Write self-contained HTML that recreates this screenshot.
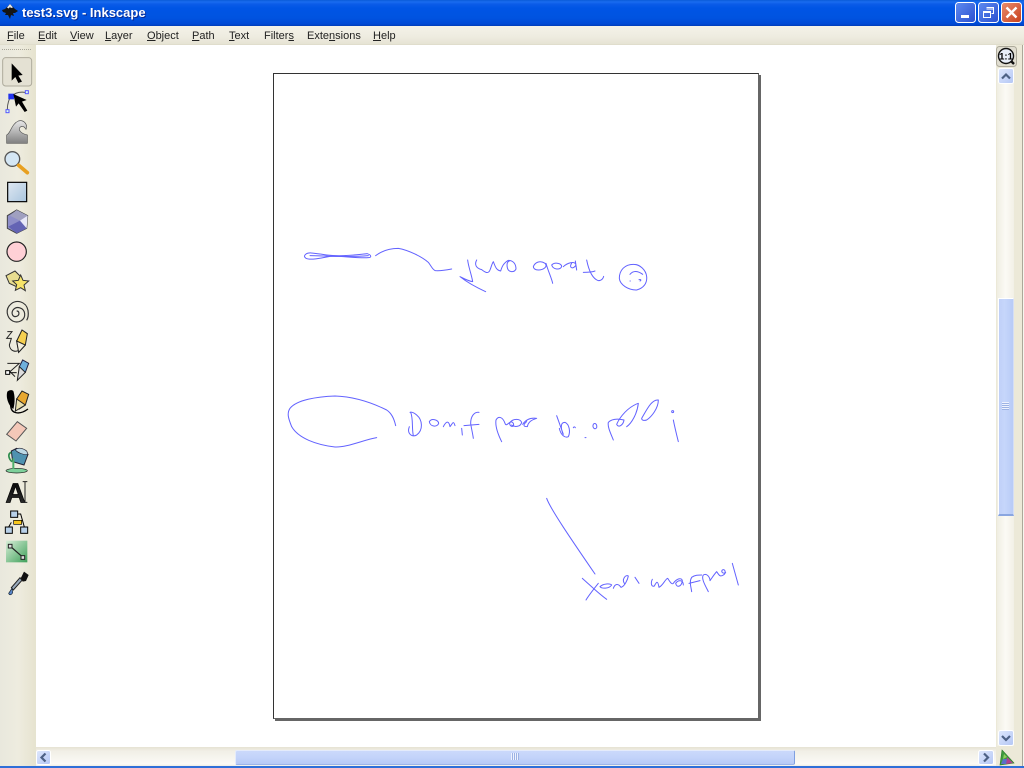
<!DOCTYPE html>
<html><head><meta charset="utf-8"><title>test3.svg - Inkscape</title>
<style>
html,body{margin:0;padding:0;width:1024px;height:768px;overflow:hidden;background:#ece9d8}
.a{position:absolute}
#title{left:0;top:0;width:1024px;height:26px;background:linear-gradient(#0a5bd8 0,#1a6cf0 2px,#0b5ce8 4px,#0055e5 8px,#0053e0 18px,#0049d5 24px,#003cb8 26px)}
#ttext{left:22px;top:5px;color:#fff;font:bold 13px "Liberation Sans",sans-serif;text-shadow:1px 1px 0 #0a2a90;white-space:nowrap}
#menu{left:0;top:26px;width:1024px;height:19px;background:linear-gradient(#f4f2e9,#eeece0 60%,#e6e3d4);border-bottom:1px solid #e0ddcc;box-sizing:border-box}
.m{position:absolute;top:4px;font:11px "Liberation Sans",sans-serif;color:#222;white-space:nowrap}
#tools{left:0;top:45px;width:36px;height:721px;background:linear-gradient(90deg,#e9e8dd,#eeecdf 50%,#e6e3cf 100%)}
#canvas{left:36px;top:45px;width:960px;height:702px;background:#fff}
#vs{left:996px;top:45px;width:28px;height:721px;background:#ece9d8}
#vt{left:997px;top:68px;width:17px;height:678px;background:linear-gradient(90deg,#f0eee2,#fbfaf5 50%,#f2f0e6)}
#hs{left:36px;top:747px;width:960px;height:19px;background:linear-gradient(#e6e3d3,#f1efe6 4px,#fbfaf6 17px,#f1efe4)}
#rb{left:996px;top:747px;width:28px;height:19px;background:#ece9d8}
#edge{left:1022px;top:45px;width:1px;height:721px;background:#aca899}
#edge2{left:1023px;top:45px;width:1px;height:721px;background:#f6f5ee}
#bot{left:0;top:766px;width:1024px;height:2px;background:#2f6fd8}
#page{left:273px;top:73px;width:484px;height:644px;background:#fff;border:1px solid #333;border-right-color:#666;border-bottom-color:#666;box-shadow:2px 2px 0 #666}
#vthumb{left:998px;top:298px;width:14px;height:215px;background:linear-gradient(90deg,#c0d0f8,#c6d6fb 40%,#b8cbf6);border:1px solid #fff;border-bottom:2px solid #8aa6e0;border-right-color:#d5def5}
#hthumb{left:235px;top:750px;width:558px;height:13px;background:linear-gradient(#cbd9fb,#c3d3fa 50%,#b7caf6);border:1px solid #e4ebfb;border-right:1px solid #7f9fe0;border-bottom:1px solid #9db5ea;border-radius:2px}
svg{position:absolute;left:0;top:0}
</style></head><body>
<div class="a" id="title"></div>
<div class="a" id="ttext">test3.svg - Inkscape</div>
<div class="a" id="menu">
<span class="m" style="left:7px;top:4px"><u>F</u>ile</span>
<span class="m" style="left:38px"><u>E</u>dit</span>
<span class="m" style="left:70px"><u>V</u>iew</span>
<span class="m" style="left:105px"><u>L</u>ayer</span>
<span class="m" style="left:147px"><u>O</u>bject</span>
<span class="m" style="left:192px"><u>P</u>ath</span>
<span class="m" style="left:229px"><u>T</u>ext</span>
<span class="m" style="left:264px">Filter<u>s</u></span>
<span class="m" style="left:307px">Exte<u>n</u>sions</span>
<span class="m" style="left:373px"><u>H</u>elp</span>
</div>
<div class="a" id="tools"></div>
<div class="a" id="canvas"></div>
<div class="a" id="vs"></div>
<div class="a" id="vt"></div>
<div class="a" id="hs"></div>
<div class="a" id="rb"></div>
<div class="a" id="edge"></div>
<div class="a" id="edge2"></div>
<div class="a" id="bot"></div>
<div class="a" id="page"></div>
<div class="a" id="vthumb"></div>
<div class="a" id="hthumb"></div>

<svg width="1024" height="768" viewBox="0 0 1024 768">
<defs>
<linearGradient id="bb" x1="0" y1="0" x2="1" y2="1"><stop offset="0" stop-color="#5f8bf0"/><stop offset="1" stop-color="#2a4fd0"/></linearGradient>
<linearGradient id="rd" x1="0" y1="0" x2="1" y2="1"><stop offset="0" stop-color="#e88d6f"/><stop offset="1" stop-color="#c8401c"/></linearGradient>
<linearGradient id="sb" x1="0" y1="0" x2="1" y2="1"><stop offset="0" stop-color="#dfe8fd"/><stop offset="1" stop-color="#b3c6f5"/></linearGradient>
<linearGradient id="rc" x1="0" y1="0" x2="1" y2="1"><stop offset="0" stop-color="#dfe8f2"/><stop offset="1" stop-color="#a9c5de"/></linearGradient>
<linearGradient id="gy" x1="0" y1="0" x2="0" y2="1"><stop offset="0" stop-color="#e8e8e8"/><stop offset="1" stop-color="#808080"/></linearGradient>
<linearGradient id="gr" x1="0" y1="0" x2="1" y2="1"><stop offset="0" stop-color="#d8eed8"/><stop offset="1" stop-color="#3fa05a"/></linearGradient>
<linearGradient id="ag" x1="0" y1="0" x2="0" y2="1"><stop offset="0" stop-color="#000"/><stop offset="1" stop-color="#333"/></linearGradient>
</defs>

<!-- inkscape logo -->
<path d="M10,4L15,9L18,11L15,13L13,13L14,16L11,15L10,19L8,15L5,15L6,13L3,12L2,10L5,9Z" fill="#151515"/>
<path d="M10,4L13,7.5L11,8L10,7L8.5,8.5L7,7.5Z" fill="#e8e8e8"/>

<!-- window buttons -->
<rect x="955.5" y="2.5" width="20" height="20" rx="3" fill="url(#bb)" stroke="#fff"/>
<rect x="961" y="15" width="8" height="3" fill="#fff"/>
<rect x="978.5" y="2.5" width="20" height="20" rx="3" fill="url(#bb)" stroke="#fff"/>
<path d="M986.5,7.5h7v6h-2M986.5,9h7" fill="none" stroke="#fff"/>
<rect x="983.5" y="11.5" width="7" height="6" fill="none" stroke="#fff"/>
<path d="M983,12.5h8" stroke="#fff"/>
<rect x="1001.5" y="2.5" width="20" height="20" rx="3" fill="url(#rd)" stroke="#fff"/>
<path d="M1006.5,7.5L1016.5,17.5M1016.5,7.5L1006.5,17.5" stroke="#fff" stroke-width="2.4"/>

<!-- handle -->
<path d="M2,49.5H32" stroke="#a9a79a" stroke-width="1" stroke-dasharray="1 1"/>

<!-- tools top (zoom coords) -->
<g transform="translate(0,50) scale(.33333)">
<rect x="8" y="23" width="87" height="85" rx="9" fill="#e4e1d3" stroke="#aeab9c" stroke-width="3"/>
<path d="M35,40L68,75L55,77L66,95L55,99L46,81L35,92Z" fill="#000"/>
<path d="M22,178C22,160 28,145 33,140C45,128 60,125 75,127" fill="none" stroke="#555" stroke-width="3"/>
<rect x="25" y="131" width="17" height="17" fill="#2233ee"/>
<rect x="76" y="122" width="9" height="9" fill="#dfe" stroke="#55f" stroke-width="3"/>
<rect x="18" y="179" width="9" height="9" fill="#dfe" stroke="#55f" stroke-width="3"/>
<path d="M40,132L80,150L66,155L82,182L74,186L56,160L48,170Z" fill="#000"/>
<path d="M20,255C32,250 34,222 55,213C70,208 84,222 78,238C74,230 66,226 60,232C54,240 62,250 82,255L82,280L20,280Z" fill="url(#gy)" stroke="#555" stroke-width="2"/>
<circle cx="37" cy="327" r="22" fill="#d4e6f4" stroke="#555" stroke-width="4"/>
<path d="M56,346L82,368" stroke="#e8a020" stroke-width="11" stroke-linecap="round"/>
<rect x="23" y="397" width="57" height="58" fill="url(#rc)" stroke="#000" stroke-width="3.5"/>
<path d="M50,480L83,497L80,535L50,550L22,535L22,497Z" fill="#8f8fc8" stroke="#444" stroke-width="3"/>
<path d="M50,480L83,497L60,512L30,497Z" fill="#a0a0c0"/>
<path d="M60,512L80,535L50,550L25,530Z" fill="#6464b4"/>
<path d="M60,512L83,497L80,535Z" fill="#e8e8f8"/>
</g>

<g transform="translate(0,235) scale(.33333)">
<circle cx="50" cy="50" r="29" fill="#ffd0d6" stroke="#222" stroke-width="3.5"/>
<path d="M18,122L45,108L62,125L50,155L28,145Z" fill="#e8dd90" stroke="#333" stroke-width="3"/>
<path d="M62,120L69,136L86,138L72,150L76,167L62,158L46,166L50,149L38,138L55,136Z" fill="#f6e46a" stroke="#333" stroke-width="3"/>
<path d="M50,228C58,228 60,240 50,244C38,248 32,234 40,224C50,212 72,218 74,236C76,256 54,266 38,258C20,248 14,222 34,206C50,194 78,198 84,226C86,240 84,250 80,256" fill="none" stroke="#333" stroke-width="3.5"/>
<path d="M22,290L36,290L20,310L34,310L28,330C30,350 48,352 58,345" fill="none" stroke="#222" stroke-width="3"/>
<path d="M50,318L66,285L82,296L76,330L56,352Z" fill="#f6d050" stroke="#222" stroke-width="3"/>
<path d="M50,318L76,330L56,352Z" fill="#f2eedd" stroke="#222" stroke-width="3"/>
<path d="M22,385H58L30,410L45,425" fill="none" stroke="#222" stroke-width="3"/>
<rect x="17" y="407" width="12" height="11" fill="#fff" stroke="#000" stroke-width="3"/>
<path d="M30,413H50" stroke="#111" stroke-width="3"/>
<path d="M58,395L68,375L86,385L76,412L56,420Z" fill="#6fb0dc" stroke="#224" stroke-width="3"/>
<path d="M58,395L76,412L52,436Z" fill="#ddd" stroke="#222" stroke-width="3"/>
<path d="M22,470C16,490 28,515 40,522C46,500 44,480 40,468C36,464 28,464 22,470Z" fill="#000"/>
<path d="M32,510C32,538 60,540 84,522" fill="none" stroke="#000" stroke-width="4"/>
<path d="M50,492L66,468L86,478L76,510L58,522Z" fill="#e8a830" stroke="#222" stroke-width="3"/>
<path d="M50,492L76,510L46,528Z" fill="#e8e0b0" stroke="#222" stroke-width="3"/>
</g>

<g transform="translate(0,415) scale(.33333)">
<path d="M52,20L80,40L48,78L20,58Z" fill="#f4c8b8" stroke="#555" stroke-width="3"/>
<path d="M34,108L50,100L84,118L72,150L38,140Z" fill="#4f92b0" stroke="#223" stroke-width="3"/>
<path d="M46,104C50,112 74,122 84,118L80,108C70,100 55,96 46,104Z" fill="#bcd8e4" stroke="#223" stroke-width="2"/>
<path d="M34,112C22,116 26,132 36,140" fill="none" stroke="#2c8c4c" stroke-width="5"/>
<ellipse cx="50" cy="167" rx="32" ry="7" fill="#7ed09a" stroke="#222" stroke-width="2"/>
<path d="M40,130V162" stroke="#4fb06c" stroke-width="6"/>
<text x="16" y="262" font-family="Liberation Sans,sans-serif" font-weight="700" font-size="84" fill="url(#ag)" stroke="#000" stroke-width="2">A</text>
<path d="M68,200H82M75,200V262M68,262H82" stroke="#222" stroke-width="3" fill="none"/>
<rect x="32" y="288" width="21" height="19" fill="#b8d0e8" stroke="#000" stroke-width="3"/>
<rect x="16" y="336" width="21" height="19" fill="#b8d0e8" stroke="#000" stroke-width="3"/>
<rect x="62" y="336" width="21" height="19" fill="#b8d0e8" stroke="#000" stroke-width="3"/>
<rect x="41" y="316" width="24" height="12" fill="#f8c820" stroke="#000" stroke-width="2"/>
<path d="M53,297H62L73,336M34,322L26,336" fill="none" stroke="#000" stroke-width="3"/>
<rect x="18" y="377" width="64" height="65" fill="url(#gr)"/>
<path d="M30,393L70,428" stroke="#222" stroke-width="3.5"/>
<rect x="25" y="388" width="11" height="11" fill="#ddd" stroke="#222" stroke-width="3"/>
<rect x="63" y="422" width="11" height="11" fill="#ddd" stroke="#222" stroke-width="3"/>
<path d="M62,490L72,470L86,480L78,498L68,500Z" fill="#111"/>
<path d="M66,496L40,525L34,518L60,488Z" fill="#9ab" stroke="#222" stroke-width="3"/>
<path d="M36,520L26,535C28,542 36,540 38,532Z" fill="#5a86c8" stroke="#123" stroke-width="2"/>
</g>

<!-- 1:1 and scroll buttons -->
<rect x="996.5" y="46.5" width="20" height="20" rx="3" fill="#e0ddd0" stroke="#aeab9c"/>
<circle cx="1006" cy="56" r="7.5" fill="#e8eef8" stroke="#111" stroke-width="1.4"/>
<path d="M1011,61L1014,64" stroke="#111" stroke-width="2.4"/>
<text x="1006" y="59.5" text-anchor="middle" font-family="Liberation Sans,sans-serif" font-size="9.5" font-weight="700" fill="#000">1:1</text>

<rect x="998.5" y="68.5" width="15" height="15" rx="2" fill="url(#sb)" stroke="#fff"/>
<path d="M1002,78.5L1006,74.5L1010,78.5" fill="none" stroke="#4d6185" stroke-width="2.2"/>
<rect x="998.5" y="730.5" width="15" height="15" rx="2" fill="url(#sb)" stroke="#fff"/>
<path d="M1002,736L1006,740L1010,736" fill="none" stroke="#4d6185" stroke-width="2.2"/>
<rect x="36.5" y="750.5" width="14" height="14" rx="2" fill="url(#sb)" stroke="#fff"/>
<path d="M45.5,753.5L41.5,757.5L45.5,761.5" fill="none" stroke="#4d6185" stroke-width="2.2"/>
<rect x="978.5" y="750.5" width="15" height="14" rx="2" fill="url(#sb)" stroke="#fff"/>
<path d="M984,753.5L988,757.5L984,761.5" fill="none" stroke="#4d6185" stroke-width="2.2"/>

<!-- grips -->
<path d="M1002,402.5H1009M1002,404.5H1009M1002,406.5H1009M1002,408.5H1009" stroke="#eef2fe" stroke-width="1"/>
<path d="M1002,403.5H1009M1002,405.5H1009M1002,407.5H1009M1002,409.5H1009" stroke="#9db3e4" stroke-width="1"/>
<path d="M511.5,753V760M513.5,753V760M515.5,753V760M517.5,753V760" stroke="#eef2fe"/>
<path d="M512.5,753V760M514.5,753V760M516.5,753V760M518.5,753V760" stroke="#9db3e4"/>

<!-- colour triangle -->
<path d="M1002,750L1014,763L1000,765Z" fill="#3f9a3f" stroke="#2c7a2c" stroke-width=".6"/>
<path d="M1004,754L1007,757L1003,759Z" fill="#8fcf5f"/>
<path d="M1007,757L1013,763L1006,764Z" fill="#b04090"/>
<path d="M1003,759L1007,759L1006,764L1001,764Z" fill="#5a70c8"/>

<!-- drawn strokes -->
<g fill="none" stroke="#6262ff" stroke-width="3" stroke-linecap="round" stroke-linejoin="round">
<g transform="translate(290,235) scale(.33333)">
<path d="M47,58C55,50 75,55 110,60C150,65 200,60 232,56C245,60 245,68 235,68C200,70 150,62 120,64C90,70 60,76 48,70C42,66 42,62 47,58"/>
<path d="M60,62C100,62 170,68 235,62"/>
<path d="M257,62C275,48 300,40 325,40C355,45 395,65 415,82C425,95 428,105 436,107C450,108 470,105 485,102"/>
<path d="M533,75C535,95 545,120 548,140C535,138 520,130 510,125C535,145 565,160 587,170"/>
<path d="M560,75C552,90 560,100 575,104C585,112 595,118 600,105C604,95 606,85 610,80C615,92 618,106 632,108C636,95 640,85 655,76C668,76 678,85 678,102C672,114 655,112 652,98C650,88 652,80 658,78"/>
<path d="M730,95C735,82 750,75 765,85C775,95 760,105 745,105C735,105 730,100 730,95M768,85C775,110 785,130 788,145"/>
<path d="M785,90C795,80 815,85 815,95C810,105 790,105 785,90M820,95C830,85 855,75 858,90C850,105 835,98 845,85M856,78L860,105"/>
<path d="M890,75C895,100 905,130 925,137C935,137 940,130 941,124M880,112C895,112 905,112 915,108"/>
<path d="M1030,88C1005,88 988,105 988,130C990,150 1015,165 1040,165C1060,160 1072,145 1070,125C1068,105 1050,88 1030,88"/>
<path d="M1020,118C1030,105 1045,108 1058,118"/>
<path d="M1020,138h1M1047,134C1052,132 1055,136 1050,138"/>
</g>
<g transform="translate(280,385) scale(.33333)">
<path d="M347,122C342,100 335,85 320,75C270,50 220,35 165,33C110,35 50,45 30,70C20,85 25,100 35,125C55,160 110,180 165,186C200,188 250,165 290,158"/>
<path d="M392,82C400,100 395,130 400,152M388,125C380,145 395,158 410,150C430,135 428,105 410,90C402,82 392,80 390,82"/>
<path d="M448,110C455,98 475,105 476,115C472,128 450,125 448,110"/>
<path d="M490,125C495,115 505,100 510,125C518,115 520,105 525,122"/>
<path d="M545,130L547,150M597,82C582,80 572,95 572,115C574,130 578,145 580,160M552,122L597,118"/>
<path d="M665,170C655,150 645,125 648,105C655,92 668,95 675,115C680,130 690,100 700,115C705,130 685,125 690,112C700,100 720,100 725,112C722,125 705,128 695,120"/>
<path d="M728,118C740,100 755,98 770,100C755,105 745,110 742,125C730,125 728,120 740,110"/>
<path d="M830,92L850,148M848,145C840,120 845,112 855,112C868,118 872,140 865,155C855,160 842,150 838,130"/>
<path d="M880,128C882,125 884,125 886,128M915,158h3"/>
<path d="M940,118C945,112 952,118 950,128C945,136 936,128 940,118"/>
<path d="M1000,165C992,145 982,125 985,112C995,102 1010,100 1032,105C1030,120 1015,130 1010,118C1020,95 1045,65 1075,55C1072,85 1055,115 1040,125"/>
<path d="M1085,100C1100,75 1115,42 1135,45C1135,70 1115,95 1100,105C1090,108 1085,105 1085,100"/>
<path d="M1180,105C1185,130 1190,150 1195,170"/>
<circle cx="1178" cy="80" r="3"/>
</g>
<g transform="translate(535,490) scale(.33333)">
<path d="M35,25C45,55 110,150 180,252"/>
<path d="M142,265C170,290 190,310 215,328M190,280C178,295 162,315 153,330"/>
<path d="M195,290C205,280 225,280 230,285C222,297 200,296 195,290"/>
<path d="M235,295C240,280 250,280 258,292C268,290 278,270 280,258C272,252 258,270 270,282"/>
<path d="M300,262L312,280"/>
<path d="M352,268C346,280 350,292 358,288C365,275 368,270 372,292C385,285 390,268 398,265C405,275 410,285 415,280C425,265 440,262 442,272C440,290 425,295 422,280C430,268 445,270 445,285"/>
<path d="M470,305C468,290 462,275 470,262C480,255 490,255 500,255M462,280L495,272"/>
<path d="M520,305C510,285 498,265 505,255C515,248 525,262 525,272C532,262 540,250 545,245C552,255 555,262 565,255C575,250 570,235 562,240C558,245 562,252 572,248"/>
<path d="M592,220L610,285"/>
</g>
</g>
</svg>
</body></html>
